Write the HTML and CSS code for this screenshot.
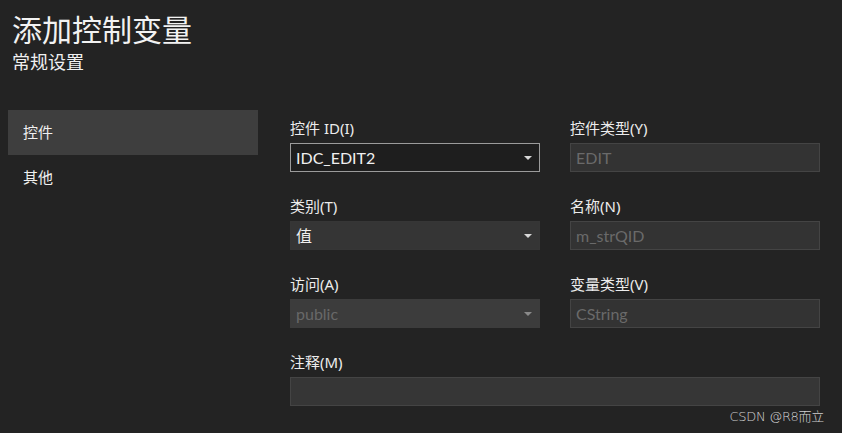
FILE: index.html
```html
<!DOCTYPE html>
<html lang="zh">
<head>
<meta charset="utf-8">
<title>添加控制变量</title>
<link rel="stylesheet" href="styles.css">
</head>
<body>
<div class="page">
  <header class="header">
    <h1 class="title">添加控制变量</h1>
    <div class="subtitle">常规设置</div>
  </header>
  <div class="main">
    <nav class="nav">
      <div class="nav-item active">控件</div>
      <div class="nav-item">其他</div>
    </nav>
    <section class="form">
      <div class="field">
        <label class="label">控件 ID(I)</label>
        <div class="select focus"><span>IDC_EDIT2</span><i class="arrow"></i></div>
      </div>
      <div class="field">
        <label class="label">控件类型(Y)</label>
        <div class="input disabled"><span>EDIT</span></div>
      </div>
      <div class="field">
        <label class="label">类别(T)</label>
        <div class="select"><span>值</span><i class="arrow"></i></div>
      </div>
      <div class="field">
        <label class="label">名称(N)</label>
        <div class="input disabled"><span>m_strQID</span></div>
      </div>
      <div class="field">
        <label class="label">访问(A)</label>
        <div class="select disabled"><span>public</span><i class="arrow"></i></div>
      </div>
      <div class="field">
        <label class="label">变量类型(V)</label>
        <div class="input disabled"><span>CString</span></div>
      </div>
      <div class="field wide">
        <label class="label">注释(M)</label>
        <div class="input"><span></span></div>
      </div>
    </section>
  </div>
  <div class="watermark">CSDN @R8而立</div>
</div>
</body>
</html>
```
FILE: styles.css
```css
* { box-sizing: border-box; }
html, body {
  margin: 0;
  padding: 0;
  background: #232323;
}
body {
  width: 842px;
  height: 433px;
  overflow: hidden;
  font-family: "Noto Sans", "Noto Sans CJK SC", sans-serif;
  color: #f0f0f0;
}
.page {
  position: relative;
  width: 842px;
  height: 433px;
}
.header {
  padding: 10px 0 0 12px;
}
.title {
  margin: 0;
  font-size: 30px;
  font-weight: normal;
  line-height: 40px;
  color: #f2f2f2;
}
.subtitle {
  font-size: 18px;
  line-height: 24px;
  color: #f0f0f0;
}
.main {
  display: flex;
  margin-top: 36px;
}
.nav {
  width: 250px;
  margin-left: 8px;
  display: flex;
  flex-direction: column;
}
.nav-item {
  height: 45px;
  line-height: 45px;
  padding-left: 15px;
  font-size: 15px;
  color: #f0f0f0;
}
.nav-item.active {
  background: #3e3e3e;
}
.form {
  margin-left: 32px;
  width: 530px;
  padding-top: 8px;
  display: grid;
  grid-template-columns: 250px 250px;
  column-gap: 30px;
  row-gap: 24px;
}
.field.wide {
  grid-column: 1 / span 2;
}
.label {
  display: block;
  height: 20px;
  line-height: 20px;
  font-size: 15px;
  color: #ececec;
  margin-bottom: 5px;
}
.select, .input {
  position: relative;
  height: 29px;
  line-height: 27px;
  padding-left: 5px;
  font-family: "Lato", "Noto Sans CJK SC", sans-serif;
  font-size: 16px;
  border: 1px solid #363636;
  background: #353535;
  color: #f0f0f0;
}
.select.focus {
  background: #1e1e1e;
  border-color: #9b9b9b;
}
.select.disabled {
  background: #3c3c3c;
  border-color: #3c3c3c;
  color: #686868;
}
.input.disabled {
  background: #333333;
  border-color: #444444;
  color: #6a6a6a;
}
.field.wide .input {
  background: #363636;
  border-color: #444444;
}
.arrow {
  position: absolute;
  right: 7px;
  top: 12px;
  width: 0;
  height: 0;
  border-left: 4px solid transparent;
  border-right: 4px solid transparent;
  border-top: 4px solid #d8d8d8;
}
.select.disabled .arrow {
  border-top-color: #8a8a8a;
}
.watermark {
  position: absolute;
  right: 18px;
  bottom: 8px;
  font-family: "DejaVu Sans", "Noto Sans CJK SC", sans-serif;
  font-size: 13px;
  font-weight: 300;
  color: #d0d0d0;
  letter-spacing: -0.3px;
}
```
